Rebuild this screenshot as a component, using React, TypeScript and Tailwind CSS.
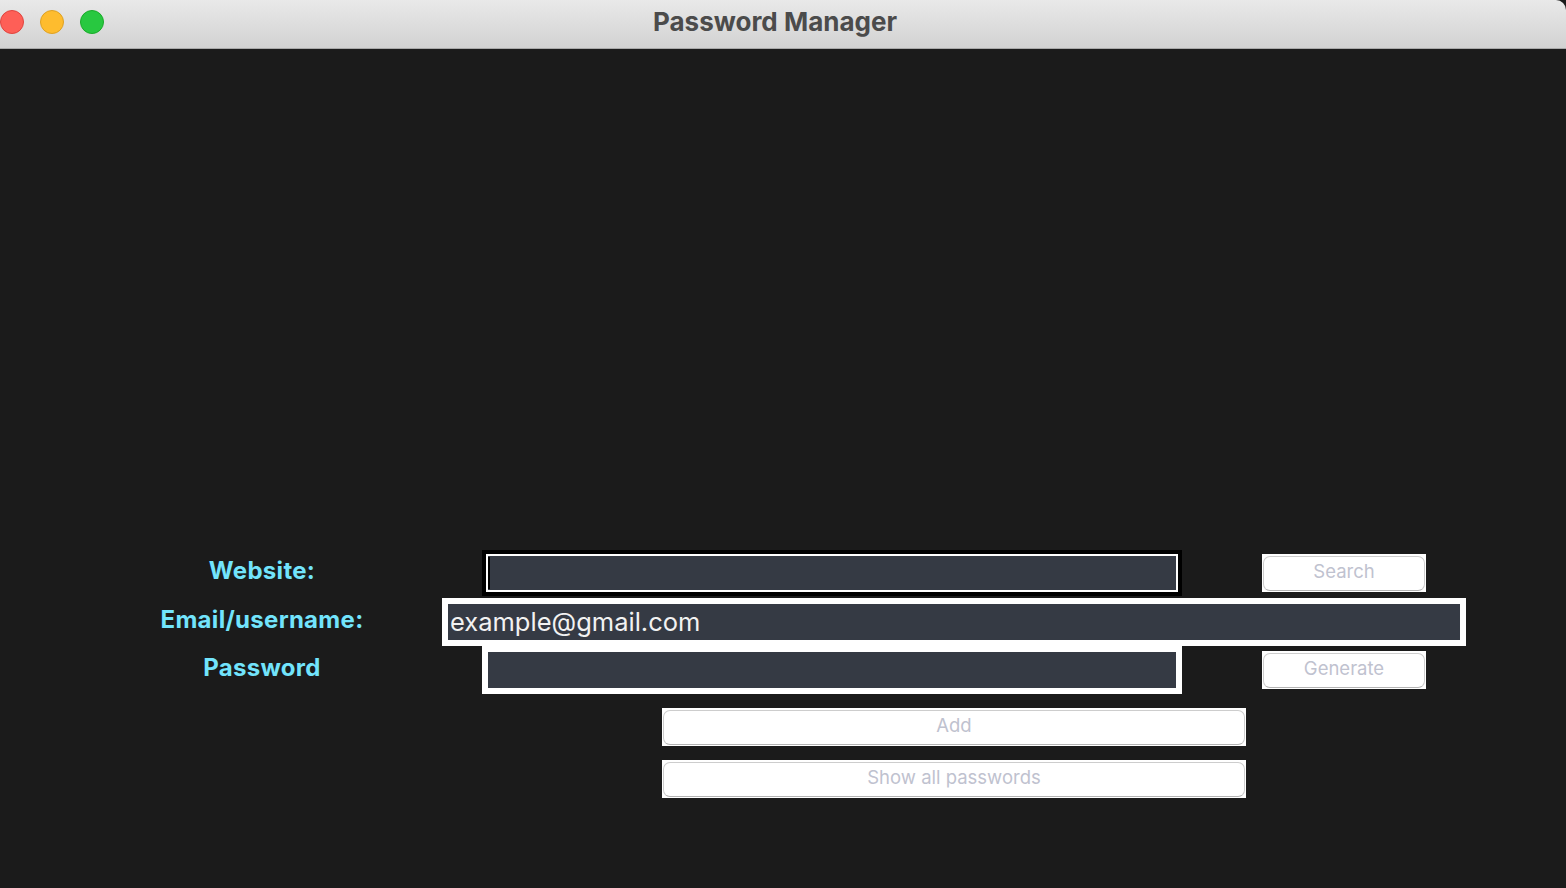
import React from "react";

const font = { fontFamily: "Inter, 'Liberation Sans', sans-serif" };

function TkButton({ label, className }: { label: string; className: string }) {
  return (
    <div className={`bg-white pt-[2px] px-[1px] pb-[1px] ${className}`}>
      <div className="w-full h-full rounded-[7px] border border-[#cdcdcd] border-b-[#b3b3b3] bg-white flex items-center justify-center text-[18.5px] text-[#bfc2cf] leading-none pb-[4px]">
        {label}
      </div>
    </div>
  );
}

export default function App() {
  return (
    <div className="w-[1566px] h-[888px] bg-[#1b1b1b] overflow-hidden flex flex-col" style={font}>
      {/* title bar */}
      <div className="relative h-[49px] shrink-0 bg-gradient-to-b from-[#e9e9e9] to-[#d2d2d2] border-b border-[#a9a9a9] rounded-tr-[10px] flex items-center">
        <div className="flex items-center gap-[16px] -mt-[4px]">
          <div className="w-[24px] h-[24px] rounded-full bg-[#fe5f57] border border-[#e0443e]" />
          <div className="w-[24px] h-[24px] rounded-full bg-[#febc2e] border border-[#dea123]" />
          <div className="w-[24px] h-[24px] rounded-full bg-[#28c840] border border-[#1aab29]" />
        </div>
        <div className="absolute inset-0 flex items-center justify-center pr-[16px] -mt-[5px] text-[26px] font-bold text-[#4b4b4b]">
          Password Manager
        </div>
      </div>

      {/* body */}
      <div className="flex flex-col pt-[501px]">
        {/* row 1 */}
        <div className="flex items-center h-[46px]">
          <div className="w-[240px] ml-[142px] text-center text-[24px] tracking-[0.3px] font-bold text-[#72e4fc] pb-[4px]">Website:</div>
          <div className="ml-[100px] w-[700px] h-[46px] bg-black p-[4px]">
            <div className="w-full h-full border-2 border-white bg-[#353a44] flex items-center">
              <div className="w-[2px] h-[32px] bg-black" />
            </div>
          </div>
          <TkButton label="Search" className="ml-[80px] w-[164px] h-[38px]" />
        </div>
        {/* row 2 */}
        <div className="flex items-center h-[48px] mt-[2px]">
          <div className="w-[240px] ml-[142px] text-center text-[24px] tracking-[0.3px] font-bold text-[#72e4fc] pb-[4px]">Email/username:</div>
          <div className="ml-[60px] w-[1024px] h-[48px] border-[6px] border-white bg-[#353a44] flex items-center pl-[2px] text-[25.5px] text-[#f2f2f2] leading-[36px]">
            example@gmail.com
          </div>
        </div>
        {/* row 3 */}
        <div className="flex items-center h-[48px]">
          <div className="w-[240px] ml-[142px] text-center text-[24px] tracking-[0.3px] font-bold text-[#72e4fc] pb-[4px]">Password</div>
          <div className="ml-[100px] w-[700px] h-[48px] border-[6px] border-white bg-[#353a44]" />
          <TkButton label="Generate" className="ml-[80px] w-[164px] h-[38px]" />
        </div>
        {/* row 4 */}
        <TkButton label="Add" className="mt-[14px] ml-[662px] w-[584px] h-[38px]" />
        {/* row 5 */}
        <TkButton label="Show all passwords" className="mt-[14px] ml-[662px] w-[584px] h-[38px]" />
      </div>
    </div>
  );
}
